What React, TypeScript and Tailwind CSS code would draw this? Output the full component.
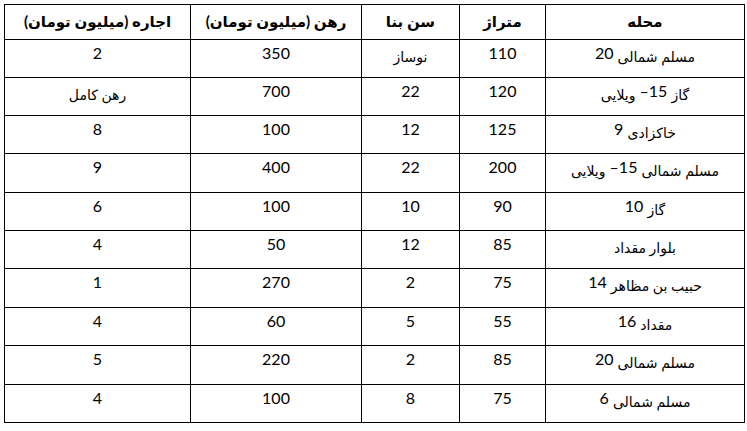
import React from "react";

type Cell = React.ReactNode;

const fa = (t: string) => <span className="text-[14px] relative top-[3px]">{t}</span>;

const rows: { h: string; cells: Cell[] }[] = [
  { h: "h-[38px]", cells: [<>{fa("مسلم شمالی")} 20</>, "110", fa("نوساز"), "350", "2"] },
  { h: "h-[38px]", cells: [<>{fa("گاز")} 15– {fa("ویلایی")}</>, "120", "22", "700", fa("رهن کامل")] },
  { h: "h-[38px]", cells: [<>{fa("خاکزادی")} 9</>, "125", "12", "100", "8"] },
  { h: "h-[39px]", cells: [<>{fa("مسلم شمالی")} 15– {fa("ویلایی")}</>, "200", "22", "400", "9"] },
  { h: "h-[38px]", cells: [<>{fa("گاز")} 10</>, "90", "10", "100", "6"] },
  { h: "h-[38px]", cells: [fa("بلوار مقداد"), "85", "12", "50", "4"] },
  { h: "h-[39px]", cells: [<>{fa("حبیب بن مظاهر")} 14</>, "75", "2", "270", "1"] },
  { h: "h-[38px]", cells: [<>{fa("مقداد")} 16</>, "55", "5", "60", "4"] },
  { h: "h-[39px]", cells: [<>{fa("مسلم شمالی")} 20</>, "85", "2", "220", "5"] },
  { h: "h-[38px]", cells: [<>{fa("مسلم شمالی")} 6</>, "75", "8", "100", "4"] },
];

const headers = ["محله", "متراژ", "سن بنا", "رهن (میلیون تومان)", "اجاره (میلیون تومان)"];

export default function App() {
  return (
    <div className="w-[747px] h-[431px] bg-white pl-[4px] pt-[4px]">
      <table
        dir="rtl"
        className="border-collapse table-fixed w-[740px] text-black text-[16px] font-['Lato','DejaVu_Sans',sans-serif]"
      >
        <colgroup>
          <col className="w-[199px]" />
          <col className="w-[86px]" />
          <col className="w-[98px]" />
          <col className="w-[171px]" />
          <col className="w-[186px]" />
        </colgroup>
        <thead>
          <tr className="h-[35px]">
            {headers.map((h) => (
              <th key={h} className="border border-black text-center align-top pt-[6px] text-[15px] font-bold leading-5">
                {h}
              </th>
            ))}
          </tr>
        </thead>
        <tbody>
          {rows.map((r, i) => (
            <tr key={i} className={r.h}>
              {r.cells.map((c, j) => (
                <td key={j} className="border border-black text-center align-top pt-[3px] leading-5 whitespace-nowrap">
                  {c}
                </td>
              ))}
            </tr>
          ))}
        </tbody>
      </table>
    </div>
  );
}
